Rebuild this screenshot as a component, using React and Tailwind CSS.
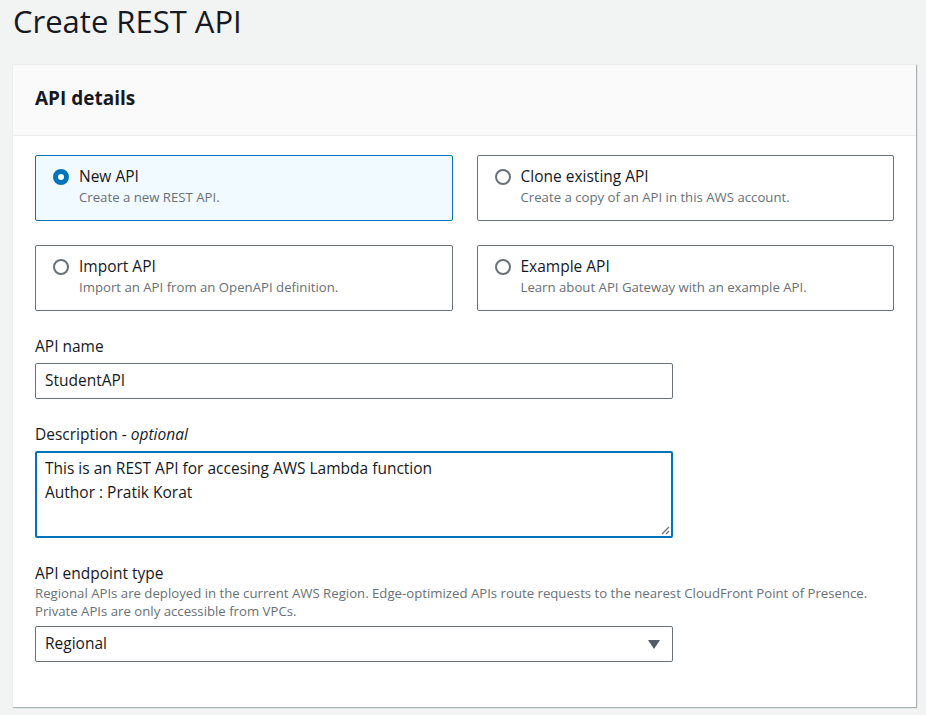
import React from "react";

const tiles = [
  { title: "New API", desc: "Create a new REST API.", selected: true },
  { title: "Clone existing API", desc: "Create a copy of an API in this AWS account." },
  { title: "Import API", desc: "Import an API from an OpenAPI definition." },
  { title: "Example API", desc: "Learn about API Gateway with an example API." },
];

function Radio({ checked }) {
  if (checked) {
    return <span className="mt-[4px] block h-4 w-4 shrink-0 rounded-full border-[5px] border-[#0073bb] bg-white" />;
  }
  return <span className="mt-[4px] block h-4 w-4 shrink-0 rounded-full border-2 border-[#687078] bg-white" />;
}

function Tile({ title, desc, selected }) {
  return (
    <div
      className={
        selected
          ? "flex h-[66px] gap-[10px] rounded-[2px] border border-[#0073bb] bg-[#f1faff] px-[17px] pt-[9px]"
          : "flex h-[66px] gap-[10px] rounded-[2px] border border-[#687078] bg-white px-[17px] pt-[9px]"
      }
    >
      <Radio checked={selected} />
      <div>
        <div className="text-[15.5px] leading-[22px] text-[#16191f]">{title}</div>
        <div className="text-[13.2px] leading-[20px] text-[#687078]">{desc}</div>
      </div>
    </div>
  );
}

export default function App() {
  return (
    <div className="min-h-[715px] bg-[#f2f3f3] font-['Open_Sans',sans-serif] text-[#16191f]">
      <h1 className="pl-[13px] pt-[2px] text-[31px] leading-[38px] text-[#16191f]">Create REST API</h1>
      <div className="ml-[12px] mr-[10px] mt-[24px] border-l border-t border-[#eaeded] bg-white shadow-[1px_1px_1px_0_rgba(0,28,36,0.3)]">
        <div className="h-[71px] border-b border-[#eaeded] bg-[#fafafa] pl-[22px] pt-[20px]">
          <h2 className="text-[19px] font-bold leading-[26px]">API details</h2>
        </div>
        <div className="px-[22px] pb-[45px] pt-[19px]">
          <div className="grid w-[859px] grid-cols-2 gap-x-[24px] gap-y-[24px]">
            {tiles.map((t) => (
              <Tile key={t.title} {...t} />
            ))}
          </div>

          <div className="mt-[24px] text-[15.5px] leading-[22px]">API name</div>
          <div className="mt-[6px] flex h-[36px] w-[638px] items-center rounded-[2px] border border-[#687078] bg-white px-[9px] text-[15.5px]">
            StudentAPI
          </div>

          <div className="mt-[24px] text-[15.5px] leading-[22px]">
            Description - <i>optional</i>
          </div>
          <div className="relative mt-[6px] h-[87px] w-[638px] rounded-[2px] border-2 border-[#0073bb] bg-white px-[8px] pt-[3px] text-[15.5px] leading-[24px]">
            <div>This is an REST API for accesing AWS Lambda function</div>
            <div>Author : Pratik Korat</div>
            <svg className="absolute bottom-[1px] right-[1px]" width="9" height="9" viewBox="0 0 9 9">
              <path d="M1 8 L8 1 M5 8 L8 5" stroke="#687078" strokeWidth="1.3" />
            </svg>
          </div>

          <div className="mt-[24px] text-[15.5px] leading-[22px]">API endpoint type</div>
          <div className="text-[13.2px] leading-[18px] text-[#687078]">
            Regional APIs are deployed in the current AWS Region. Edge-optimized APIs route requests to the nearest CloudFront Point of Presence.
            <br />
            Private APIs are only accessible from VPCs.
          </div>
          <div className="mt-[6px] flex h-[36px] w-[638px] items-center justify-between rounded-[2px] border border-[#687078] bg-white pl-[9px] pr-[12px] text-[15.5px]">
            <span>Regional</span>
            <svg width="12" height="9" viewBox="0 0 12 9">
              <path d="M0 0 H12 L6 9 Z" fill="#545b64" />
            </svg>
          </div>
        </div>
      </div>
    </div>
  );
}
